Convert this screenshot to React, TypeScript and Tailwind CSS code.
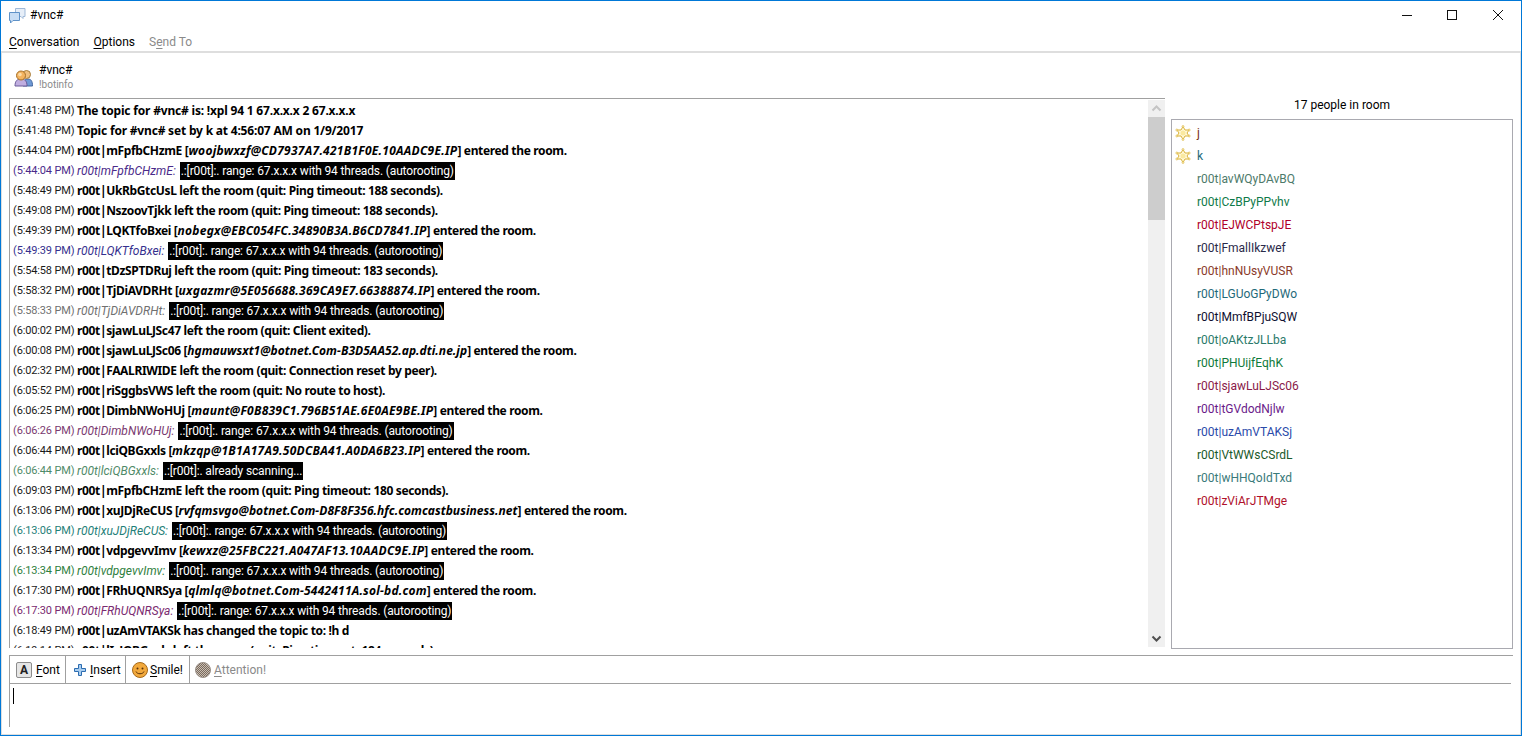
import React from "react";

const R = "font-['Roboto','Noto_Sans',sans-serif]";

type Row =
  | { t: string; b: React.ReactNode; c?: undefined; k?: string }
  | { t: string; c: string; n: string; m: string };

const msg = ".:[r00t]:. range: 67.x.x.x with 94 threads. (autorooting)";

const E = ({ n, h, k }: { n: string; h: string; k: string }) => (
  <>
    {n} [<i className={k}>{h}</i>] entered the room.
  </>
);

const IP = "tracking-[0.26px]";
const DOM = "tracking-[0.04px]";
const MID = "tracking-[0.2px]";

const rows: Row[] = [
  { t: "5:41:48 PM", k: "tracking-[-0.19px]", b: "The topic for #vnc# is: !xpl 94 1 67.x.x.x 2 67.x.x.x" },
  { t: "5:41:48 PM", k: "tracking-[-0.19px]", b: "Topic for #vnc# set by k at 4:56:07 AM on 1/9/2017" },
  { t: "5:44:04 PM", b: <E k={IP} n="r00t|mFpfbCHzmE" h="woojbwxzf@CD7937A7.421B1F0E.10AADC9E.IP" /> },
  { t: "5:44:04 PM", c: "#4a2a8a", n: "r00t|mFpfbCHzmE:", m: msg },
  { t: "5:48:49 PM", b: "r00t|UkRbGtcUsL left the room (quit: Ping timeout: 188 seconds)." },
  { t: "5:49:08 PM", b: "r00t|NszoovTjkk left the room (quit: Ping timeout: 188 seconds)." },
  { t: "5:49:39 PM", b: <E k={IP} n="r00t|LQKTfoBxei" h="nobegx@EBC054FC.34890B3A.B6CD7841.IP" /> },
  { t: "5:49:39 PM", c: "#35308e", n: "r00t|LQKTfoBxei:", m: msg },
  { t: "5:54:58 PM", b: "r00t|tDzSPTDRuj left the room (quit: Ping timeout: 183 seconds)." },
  { t: "5:58:32 PM", b: <E k={IP} n="r00t|TjDiAVDRHt" h="uxgazmr@5E056688.369CA9E7.66388874.IP" /> },
  { t: "5:58:33 PM", c: "#707070", n: "r00t|TjDiAVDRHt:", m: msg },
  { t: "6:00:02 PM", b: "r00t|sjawLuLJSc47 left the room (quit: Client exited)." },
  { t: "6:00:08 PM", b: <E k={DOM} n="r00t|sjawLuLJSc06" h="hgmauwsxt1@botnet.Com-B3D5AA52.ap.dti.ne.jp" /> },
  { t: "6:02:32 PM", b: "r00t|FAALRIWIDE left the room (quit: Connection reset by peer)." },
  { t: "6:05:52 PM", b: "r00t|riSggbsVWS left the room (quit: No route to host)." },
  { t: "6:06:25 PM", b: <E k={IP} n="r00t|DimbNWoHUj" h="maunt@F0B839C1.796B51AE.6E0AE9BE.IP" /> },
  { t: "6:06:26 PM", c: "#7a3a70", n: "r00t|DimbNWoHUj:", m: msg },
  { t: "6:06:44 PM", b: <E k={IP} n="r00t|lciQBGxxls" h="mkzqp@1B1A17A9.50DCBA41.A0DA6B23.IP" /> },
  { t: "6:06:44 PM", c: "#4f8a68", n: "r00t|lciQBGxxls:", m: ".:[r00t]:. already scanning..." },
  { t: "6:09:03 PM", b: "r00t|mFpfbCHzmE left the room (quit: Ping timeout: 180 seconds)." },
  { t: "6:13:06 PM", b: <E k={DOM} n="r00t|xuJDjReCUS" h="rvfqmsvgo@botnet.Com-D8F8F356.hfc.comcastbusiness.net" /> },
  { t: "6:13:06 PM", c: "#1f8078", n: "r00t|xuJDjReCUS:", m: msg },
  { t: "6:13:34 PM", b: <E k={IP} n="r00t|vdpgevvImv" h="kewxz@25FBC221.A047AF13.10AADC9E.IP" /> },
  { t: "6:13:34 PM", c: "#2f8040", n: "r00t|vdpgevvImv:", m: msg },
  { t: "6:17:30 PM", b: <E k={MID} n="r00t|FRhUQNRSya" h="qlmlq@botnet.Com-5442411A.sol-bd.com" /> },
  { t: "6:17:30 PM", c: "#7a2a70", n: "r00t|FRhUQNRSya:", m: msg },
  { t: "6:18:49 PM", b: "r00t|uzAmVTAKSk has changed the topic to: !h d" },
  { t: "6:19:14 PM", b: "r00t|lIzJQBGxxls left the room (quit: Ping timeout: 184 seconds)." },
];

const people: [string, string][] = [
  ["r00t|avWQyDAvBQ", "#4d7a6a"],
  ["r00t|CzBPyPPvhv", "#0f7a4a"],
  ["r00t|EJWCPtspJE", "#b0002a"],
  ["r00t|FmallIkzwef", "#2a2a4a"],
  ["r00t|hnNUsyVUSR", "#8a3a2a"],
  ["r00t|LGUoGPyDWo", "#1f6a7a"],
  ["r00t|MmfBPjuSQW", "#101030"],
  ["r00t|oAKtzJLLba", "#2a7a6a"],
  ["r00t|PHUijfEqhK", "#0f7a3a"],
  ["r00t|sjawLuLJSc06", "#8a1a4a"],
  ["r00t|tGVdodNjlw", "#6a1a8a"],
  ["r00t|uzAmVTAKSj", "#2a4aaa"],
  ["r00t|VtWWsCSrdL", "#1a5a2a"],
  ["r00t|wHHQoIdTxd", "#3a7a7a"],
  ["r00t|zViArJTMge", "#b0102a"],
];

function Star() {
  return (
    <svg width="16" height="16" viewBox="0 0 16 16" className="shrink-0">
      <path d="M8 1.500L10 5h4L12 8l2 3h-4l-2 3.500L6 11H2l2-3-2-3h4z" fill="#fff8d8" stroke="#d9b23a" strokeWidth="1" />
      <circle cx="8" cy="8" r="2.500" fill="#fae9a0" />
      <circle cx="8" cy="1.500" r="1" fill="#fdf3c4" stroke="#d9b23a" strokeWidth=".6" />
      <circle cx="8" cy="14.500" r="1" fill="#fdf3c4" stroke="#d9b23a" strokeWidth=".6" />
      <circle cx="1.800" cy="5" r="1" fill="#fdf3c4" stroke="#d9b23a" strokeWidth=".6" />
      <circle cx="14.200" cy="5" r="1" fill="#fdf3c4" stroke="#d9b23a" strokeWidth=".6" />
      <circle cx="1.800" cy="11" r="1" fill="#fdf3c4" stroke="#d9b23a" strokeWidth=".6" />
      <circle cx="14.200" cy="11" r="1" fill="#fdf3c4" stroke="#d9b23a" strokeWidth=".6" />
    </svg>
  );
}

function U({ children }: { children: string }) {
  return <span className="underline underline-offset-2">{children}</span>;
}

export default function App() {
  return (
    <div className={`${R} flex h-[736px] w-[1522px] flex-col overflow-hidden border border-[#0078d7] bg-white text-[12px] text-black`}>
      {/* title bar */}
      <div className="flex h-[28px] shrink-0 items-center pl-[8px]">
        <svg width="17" height="17" viewBox="0 0 17 17" className="mr-[4px] shrink-0">
          <path d="M6.500 1.500h9.500v8h-2v2l-2-2H6.500z" fill="#e6eef8" stroke="#9fb9d8" />
          <path d="M.5 5.500h10v8H4l-2.500 2.500v-2.500H.5z" fill="#c8ddf4" stroke="#5f92c8" />
        </svg>
        <span>#vnc#</span>
        <div className="ml-auto flex items-center">
          <svg width="46" height="28" viewBox="0 0 46 28"><path d="M19 14.500h10" stroke="#111" strokeWidth="1" /></svg>
          <svg width="46" height="28" viewBox="0 0 46 28"><rect x="18.500" y="9.500" width="9" height="9" fill="none" stroke="#111" /></svg>
          <svg width="46" height="28" viewBox="0 0 46 28"><path d="M18 9l10 10M28 9L18 19" stroke="#111" strokeWidth="1" /></svg>
        </div>
      </div>
      {/* menu bar */}
      <div className="flex h-[22px] shrink-0 items-center gap-[14px] pl-[8px] pt-[3px]">
        <span><U>C</U>onversation</span>
        <span><U>O</U>ptions</span>
        <span className="text-[#8a8a8a]">S<U>e</U>nd To</span>
      </div>
      {/* framed body */}
      <div className="flex min-h-0 flex-1 flex-col border-x border-b border-t-2 border-[#dedede]">
        {/* room header */}
        <div className="flex h-[45px] shrink-0 items-center pl-[12px] pt-[4px]">
          <svg width="19" height="18" viewBox="0 0 19 18" className="mr-[6px] shrink-0">
            <path d="M9 17c0-5 2-7 5-7s4.500 2 4.500 7z" fill="#6f9ad6" stroke="#45689f" />
            <path d="M1 17c0-5 2-7 6-7s6 2 6 7z" fill="#c0aee0" stroke="#6a5a98" />
            <circle cx="12.500" cy="5.500" r="4" fill="#f0c080" stroke="#a67c3a" />
            <circle cx="7" cy="6.500" r="4.500" fill="#f4b460" stroke="#a67028" />
            <circle cx="6" cy="5.500" r="1.800" fill="#fbdca8" />
          </svg>
          <div className="flex flex-col leading-[14px]">
            <span>#vnc#</span>
            <span className="mt-px text-[10px] text-[#8a8a8a]">!botinfo</span>
          </div>
        </div>
        {/* main */}
        <div className="flex h-[557px] shrink-0 pl-[7px] pr-[7px]">
          <div className="flex h-[550px] w-[1156px] shrink-0 border-l border-t border-[#a0a0a0]">
            <div className="h-[549px] min-w-0 flex-1 overflow-hidden pl-[3px] pt-[2px]">
              {rows.map((r, i) => (
                <div key={i} className="flex h-[20px] items-center whitespace-nowrap">
                  <span className="w-[64px] shrink-0 text-[11px] tracking-[-0.15px]" style={{ color: r.c ?? "#1a1a1a" }}>({r.t})</span>
                  {r.c ? (
                    <>
                      <i className="mr-[4px]" style={{ color: r.c }}>{r.n}</i>
                      <span className="bg-black px-px tracking-[-0.14px] text-white">{r.m}</span>
                    </>
                  ) : (
                    <b className={`font-['Noto_Sans',sans-serif] ${r.k ?? "tracking-[-0.35px]"}`}>{r.b}</b>
                  )}
                </div>
              ))}
            </div>
            <div className="mt-px flex h-[547px] w-[17px] shrink-0 flex-col items-center bg-[#f0f0f0]">
              <svg width="17" height="17" viewBox="0 0 17 17" className="shrink-0"><path d="M4.500 10.500l4-4 4 4" fill="none" stroke="#c4c4c4" strokeWidth="2" /></svg>
              <div className="h-[103px] w-full shrink-0 bg-[#cdcdcd]" />
              <div className="flex-1" />
              <svg width="17" height="17" viewBox="0 0 17 17" className="shrink-0"><path d="M4.500 6.500l4 4 4-4" fill="none" stroke="#505050" strokeWidth="2" /></svg>
            </div>
          </div>
          <div className="ml-[6px] flex h-[551px] w-[342px] shrink-0 flex-col">
            <div className="flex h-[21px] shrink-0 justify-center leading-[14px]">17 people in room</div>
            <div className="min-h-0 flex-1 border border-[#a9a9b0] pl-[3px] pt-[1px]">
              <div className="flex h-[23px] items-center gap-[6px] text-[#7a3010]"><Star /><span>j</span></div>
              <div className="flex h-[23px] items-center gap-[6px] text-[#1f6a7a]"><Star /><span>k</span></div>
              {people.map(([n, c]) => (
                <div key={n} className="flex h-[23px] items-center pl-[22px]" style={{ color: c }}>{n}</div>
              ))}
            </div>
          </div>
        </div>
        {/* composer */}
        <div className="ml-[7px] mr-[7px] flex h-[72px] shrink-0 flex-col border-l border-t border-[#a0a0a0]">
          <div className="mr-[2px] flex h-[28px] shrink-0 items-center border-b border-[#a0a0a0] pl-px">
            <div className="flex h-full w-[55px] items-center gap-[4px] border-r border-[#a0a0a0] pl-[5px]">
              <span className="flex h-[16px] w-[16px] items-center justify-center rounded-[2px] border border-[#8c8c8c] bg-[#e6e6e6] text-[12px] font-bold leading-none text-[#222]">A</span>
              <span><U>F</U>ont</span>
            </div>
            <div className="flex h-full w-[60px] items-center gap-[4px] border-r border-[#a0a0a0] pl-[8px]">
              <svg width="12" height="12" viewBox="0 0 12 12"><path d="M4.500.5h3v4h4v3h-4v4h-3v-4h-4v-3h4z" fill="#a8cdf0" stroke="#2c6cb0" /></svg>
              <span><U>I</U>nsert</span>
            </div>
            <div className="flex h-full w-[64px] items-center gap-[2px] border-r border-[#a0a0a0] pl-[6px]">
              <svg width="16" height="16" viewBox="0 0 16 16"><circle cx="8" cy="8" r="7.500" fill="#f2a93c" stroke="#a66a1a" /><circle cx="5.500" cy="6.500" r="1" fill="#5a3008" /><circle cx="10.500" cy="6.500" r="1" fill="#5a3008" /><path d="M4 9.500c1 3 7 3 8 0" fill="none" stroke="#5a3008" /></svg>
              <span><U>S</U>mile!</span>
            </div>
            <div className="flex h-full items-center gap-[3px] pl-[5px] text-[#8a8a8a]">
              <svg width="16" height="16" viewBox="0 0 16 16">
                <defs>
                  <pattern id="dither" width="2" height="2" patternUnits="userSpaceOnUse">
                    <rect width="2" height="2" fill="#c8beb4" />
                    <rect width="1" height="1" fill="#7a6a5c" />
                    <rect x="1" y="1" width="1" height="1" fill="#7a6a5c" />
                  </pattern>
                </defs>
                <circle cx="8" cy="8" r="7.500" fill="url(#dither)" stroke="#9a9088" />
              </svg>
              <span><U>A</U>ttention!</span>
            </div>
          </div>
          <div className="pl-[3px] pt-[4px]">
            <div className="h-[16px] w-px bg-black" />
          </div>
        </div>
      </div>
    </div>
  );
}
